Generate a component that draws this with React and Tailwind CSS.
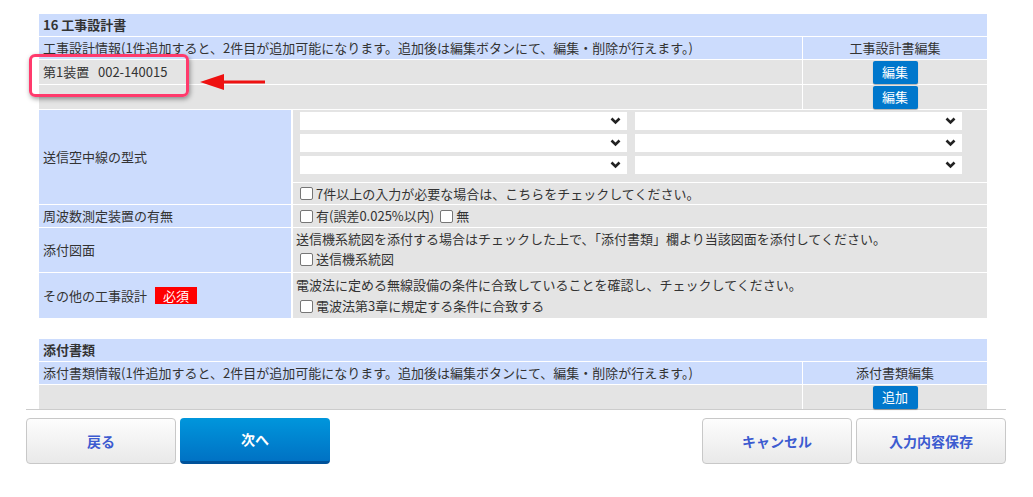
import React from 'react';

const font = "font-['Noto_Sans_CJK_JP','Noto_Sans',sans-serif]";

function Checkbox() {
    return <span className="inline-block w-[13px] h-[13px] bg-white border border-[#767676] rounded-[2px] mr-[3px] align-[-2px]" />;
}

function SelectBox() {
    return (
        <div className="relative h-[18px] bg-white">
            <svg className="absolute right-[6px] top-[5px]" width="11" height="8" viewBox="0 0 11 8">
                <path d="M1.5 1.5 L5.5 5.5 L9.5 1.5" fill="none" stroke="#222" strokeWidth="2.6" />
            </svg>
        </div>
    );
}

function BlueSmall({ children }) {
    return (
        <span className="inline-flex items-center justify-center w-[45px] h-[23px] bg-[#0077cc] text-white rounded-[2px] shadow-[0_1px_1px_rgba(0,0,0,0.3)] text-[13px]">
            {children}
        </span>
    );
}

function ListSection({ title, info, editLabel, rows }) {
    return (
        <div className="flex flex-col gap-px">
            <div className="h-[22px] bg-[#ccdcfd] px-[4px] leading-[22px] font-bold">{title}</div>
            <div className="flex gap-px h-[22px] leading-[22px]">
                <div className="flex-1 bg-[#ccdcfd] px-[4px] whitespace-nowrap overflow-hidden">{info}</div>
                <div className="w-[184px] bg-[#ccdcfd] text-center">{editLabel}</div>
            </div>
            {rows.map((r, i) => (
                <div key={i} className="flex gap-px h-[24px]">
                    <div className="flex-1 bg-[#e4e4e4] px-[4px] leading-[24px]">{r.text}</div>
                    <div className="w-[184px] bg-[#e4e4e4] flex justify-center items-center">
                        <BlueSmall>{r.btn}</BlueSmall>
                    </div>
                </div>
            ))}
        </div>
    );
}

function FormRow({ label, h, children }) {
    return (
        <div className="flex gap-[2px]" style={{ height: h }}>
            <div className="w-[252px] bg-[#ccdcfd] px-[4px] flex items-center">{label}</div>
            <div className="flex-1 flex flex-col gap-px">{children}</div>
        </div>
    );
}

export default function App() {
    return (
        <div className={`relative w-[1033px] h-[497px] bg-white text-[13px] text-[#333] ${font}`}>
            <div className="pt-[14px] pl-[39px] w-[987px]">
                <ListSection
                    title="16 工事設計書"
                    info="工事設計情報(1件追加すると、2件目が追加可能になります。追加後は編集ボタンにて、編集・削除が行えます。)"
                    editLabel="工事設計書編集"
                    rows={[
                        { text: '第1装置\u00a0\u00a0\u00a0002-140015', btn: '編集' },
                        { text: '', btn: '編集' },
                    ]}
                />
                <div className="flex flex-col gap-px mt-px">
                    <FormRow label="送信空中線の型式" h={94}>
                        <div className="h-[72px] bg-[#e4e4e4] pl-[7px] pr-[25px] pt-[2px] grid grid-cols-2 gap-x-[8px] gap-y-[4px] content-start">
                            <SelectBox />
                            <SelectBox />
                            <SelectBox />
                            <SelectBox />
                            <SelectBox />
                            <SelectBox />
                        </div>
                        <div className="flex-1 bg-[#e4e4e4] px-[7px] flex items-center">
                            <Checkbox />7件以上の入力が必要な場合は、こちらをチェックしてください。
                        </div>
                    </FormRow>
                    <FormRow label="周波数測定装置の有無" h={22}>
                        <div className="flex-1 bg-[#e4e4e4] px-[7px] flex items-center">
                            <Checkbox />有(誤差0.025%以内)<span className="ml-[6px]" />
                            <Checkbox />無
                        </div>
                    </FormRow>
                    <FormRow label="添付図面" h={44}>
                        <div className="flex-1 bg-[#e4e4e4] px-[3px] pt-[1px] leading-[20px]">
                            <div>送信機系統図を添付する場合はチェックした上で、「添付書類」欄より当該図面を添付してください。</div>
                            <div className="pl-[4px]"><Checkbox />送信機系統図</div>
                        </div>
                    </FormRow>
                    <FormRow
                        label={
                            <>
                                その他の工事設計
                                <span className="ml-[8px] inline-flex items-center justify-center w-[42px] h-[17px] bg-[#ff0000] text-white text-[13px]">必須</span>
                            </>
                        }
                        h={45}
                    >
                        <div className="flex-1 bg-[#e4e4e4] px-[3px] pt-[1px] leading-[21px]">
                            <div>電波法に定める無線設備の条件に合致していることを確認し、チェックしてください。</div>
                            <div className="pl-[4px]"><Checkbox />電波法第3章に規定する条件に合致する</div>
                        </div>
                    </FormRow>
                </div>
                <div className="mt-[21px]">
                    <ListSection
                        title="添付書類"
                        info="添付書類情報(1件追加すると、2件目が追加可能になります。追加後は編集ボタンにて、編集・削除が行えます。)"
                        editLabel="添付書類編集"
                        rows={[{ text: '', btn: '追加' }]}
                    />
                </div>
            </div>
            <div className="ml-[26px] w-[980px] h-px bg-[#cccccc]" />
            <div className="ml-[26px] w-[980px] mt-[8px] flex items-center justify-between">
                <div className="flex gap-[4px]">
                    <button type="button" className="w-[150px] h-[46px] rounded-[4px] border border-[#c8c8c8] bg-gradient-to-b from-[#fdfdfd] to-[#e9e9e9] text-[#3c5bd0] font-bold text-[14px]">
                        戻る
                    </button>
                    <button type="button" className="w-[150px] h-[46px] rounded-[4px] border-b-[3px] border-[#00529a] bg-gradient-to-b from-[#0096dc] to-[#0072c4] text-white font-bold text-[14px]">
                        次へ
                    </button>
                </div>
                <div className="flex gap-[4px]">
                    <button type="button" className="w-[150px] h-[46px] rounded-[4px] border border-[#c8c8c8] bg-gradient-to-b from-[#fdfdfd] to-[#e9e9e9] text-[#3c5bd0] font-bold text-[14px]">
                        キャンセル
                    </button>
                    <button type="button" className="w-[150px] h-[46px] rounded-[4px] border border-[#c8c8c8] bg-gradient-to-b from-[#fdfdfd] to-[#e9e9e9] text-[#3c5bd0] font-bold text-[14px]">
                        入力内容保存
                    </button>
                </div>
            </div>

            {/* annotation overlay */}
            <div className="absolute left-[29px] top-[54px] w-[160px] h-[43px] rounded-[6px] border-[3px] border-[#ff3a6c] shadow-[1px_2px_5px_rgba(0,0,0,0.4)]" />
            <svg className="absolute left-[198px] top-[71px]" width="70" height="22" viewBox="0 0 70 22">
                <line x1="22" y1="11" x2="67" y2="11" stroke="#ee1111" strokeWidth="3" />
                <path d="M2 11 L26 3 L26 19 Z" fill="#ee1111" />
            </svg>
        </div>
    );
}
